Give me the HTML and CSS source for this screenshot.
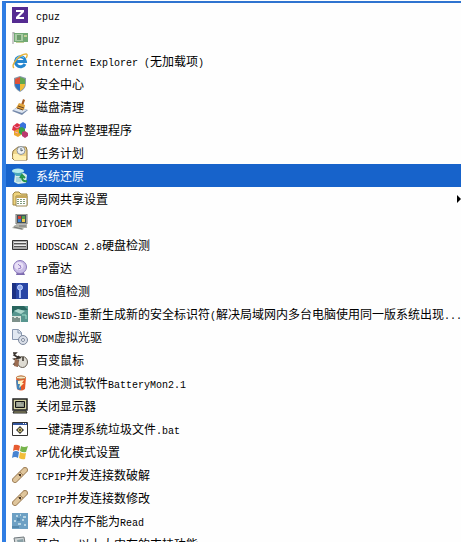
FILE: index.html
```
<!DOCTYPE html>
<html lang="zh-CN">
<head>
<meta charset="utf-8">
<title>系统工具</title>
<link rel="stylesheet" href="styles.css">
</head>
<body>
<nav class="menu" aria-label="系统工具">
<button class="item"><svg class="icon" viewBox="0 0 16 16"><rect width="16" height="16" fill="#552b91"/><path d="M4 3h8v2L7 10h5v2H4v-2l5-5H4z" fill="#fff"/></svg><span class="label"><span class="latin">cpuz</span></span></button>
<button class="item"><svg class="icon" viewBox="0 0 16 16"><path d="M1 2v12M1 3h2" stroke="#999" fill="none"/><path d="M2 3h14v9H2z" fill="#72a974"/><path d="M3 4h8v7H3z" fill="#a9cba4"/><path d="M5 5h4v5H5z" fill="#6d9c6c"/><path d="M12 5h3v2h-3zM4 12h8v1H4z" fill="#c3cf96"/></svg><span class="label"><span class="latin">gpuz</span></span></button>
<button class="item"><svg class="icon" viewBox="0 0 16 16"><path d="M13 11A5 5 0 1 1 13.500 8.500H5" fill="none" stroke="#2385cf" stroke-width="3"/><path d="M4 7a4.500 4.500 0 0 1 8-2" fill="none" stroke="#77c9f4"/><path d="M2 15C-2 12 8 1 14 1c2 0 1 3 0 4" fill="none" stroke="#e5b33b" stroke-width="1.400"/></svg><span class="label"><span class="latin">Internet Explorer (</span>无加载项<span class="latin">)</span></span></button>
<button class="item"><svg class="icon" viewBox="0 0 16 16"><path d="M8 0l6 2v5q0 6-6 9-6-3-6-9V2z" fill="#8799aa"/><path d="M8 1v7H3V3z" fill="#df5138"/><path d="M8 1l5 2v5H8z" fill="#61a84d"/><path d="M3 8h5v7Q3 12 3 8z" fill="#2d72c2"/><path d="M8 8h5q0 4-5 7z" fill="#f2be36"/></svg><span class="label">安全中心</span></button>
<button class="item"><svg class="icon" viewBox="0 0 16 16"><path d="M0 12l5-4 11 3-6 5z" fill="#7589aa"/><path d="M1 11l5-3 9 3-5 3z" fill="#dbe4ef"/><path d="M11 0l2 1-2 6-2-1z" fill="#a55c25"/><path d="M7 4l6 2-1 5-8-2z" fill="#e1a43e"/><path d="M5 9l6 2M6 7l6 2" stroke="#6e4824"/></svg><span class="label">磁盘清理</span></button>
<button class="item"><svg class="icon" viewBox="0 0 16 16"><path d="M1 4l4-3 4 2v5l-4 2-5-2z" fill="#dd3045"/><path d="M8 2l3-2 3 2v4l-3 2-3-2z" fill="#3973dd"/><path d="M2 9l4-2 3 2v4l-3 2-4-2z" fill="#eca62d"/><path d="M7 6l3-1 3 2v4l-3 2-3-2z" fill="#39a348"/><path d="M10 10l3-1 3 2v3l-3 2-3-2z" fill="#bb396e"/><path d="M2 4l3 2 3-2M3 10l3 1" stroke="#f2a4c5" fill="none"/></svg><span class="label">磁盘碎片整理程序</span></button>
<button class="item"><svg class="icon" viewBox="0 0 16 16"><path d="M1 6l5-4h8l1 3v10H2L0 13z" fill="#efd58a" stroke="#8d7441"/><circle cx="9" cy="5.500" r="4" fill="#eef1f3" stroke="#8b949d"/><path d="M9 3v3l2-1" fill="none" stroke="#526270"/><path d="M1 9h5l2 2h6v4H2z" fill="#fff0b3"/></svg><span class="label">任务计划</span></button>
<button class="item selected"><svg class="icon" viewBox="0 0 16 16"><path d="M3 6l9-1 3 2-1 8-8 1-4-2z" fill="#d4ece7"/><ellipse cx="6" cy="3" rx="6" ry="2.500" fill="#b5ebed"/><path d="M1 4q5 2 10 0L9 8H4z" fill="#4ba9bb"/><path d="M4 9h5v5H4z" fill="#a9d4db"/><path d="M15 13q-5 1-5-4m-2 1l2-3 3 3" fill="none" stroke="#239247" stroke-width="2"/></svg><span class="label">系统还原</span></button>
<button class="item"><svg class="icon" viewBox="0 0 16 16"><path d="M1 14V3l2-2h4l2 2h6v11z" fill="#eed37c" stroke="#9f8642"/><path d="M4 5h11v10H4z" fill="#fff" stroke="#9a8955"/><path d="M4 5h11v2H4z" fill="#c7a858"/><path d="M6 8v6M9 8v6M12 8v6" stroke="#7f9b7b" stroke-width="2" stroke-dasharray="1 1"/></svg><span class="label">局网共享设置</span><span class="arrow"></span></button>
<button class="item"><svg class="icon" viewBox="0 0 16 16"><path d="M4 0h11v10H4z" fill="#c9c9b9" stroke="#777"/><path d="M5 1h9v8H5z" fill="#40515b"/><path d="M6 2h3v3H6z" fill="#d44334"/><path d="M10 2h3v3h-3z" fill="#58a149"/><path d="M6 5h3v3H6z" fill="#397dcc"/><path d="M10 5h3v3h-3z" fill="#edc94b"/><path d="M3 11h12v3H3zM0 14l3-3 9 2-1 3z" fill="#b1b2a8"/><path d="M2 13l8 2M7 12h7" stroke="#777"/></svg><span class="label"><span class="latin">DIYOEM</span></span></button>
<button class="item"><svg class="icon" viewBox="0 0 16 16"><path d="M.5 3.500h15v9H.5z" fill="#aaa" stroke="#333"/><path d="M2 5.500h12M2 8.500h12" stroke="#eee"/><path d="M2 6.500h12M2 9.500h12" stroke="#555"/></svg><span class="label"><span class="latin">HDDSCAN 2.8</span>硬盘检测</span></button>
<button class="item"><svg class="icon" viewBox="0 0 16 16"><path d="M5 12l6-1 2 4H4z" fill="#7b69ad"/><circle cx="8" cy="7" r="6.500" fill="#c8bce6" stroke="#8a78bb"/><ellipse cx="7" cy="6" rx="4.500" ry="4" fill="#e8dff6"/><path d="M6 4l3 3M8 5l1 3-3 1" stroke="#9b84c9" fill="none"/></svg><span class="label"><span class="latin">IP</span>雷达</span></button>
<button class="item"><svg class="icon" viewBox="0 0 16 16"><rect width="16" height="16" fill="#2946a5"/><path d="M0 0h4v16H0z" fill="#1c3183"/><circle cx="8" cy="4.500" r="2.500" fill="#8da8ee" stroke="#c6d6ff"/><path d="M8 7v8" stroke="#a4bbf5" stroke-width="2"/></svg><span class="label"><span class="latin">MD5</span>值检测</span></button>
<button class="item"><svg class="icon" viewBox="0 0 16 16"><rect width="16" height="16" fill="#57968f"/><path d="M0 0h12l4 4H3L0 8z" fill="#28655e"/><path d="M2 5l4-2 7 2-4 3z" fill="#abd7cd"/><path d="M0 10h9v6H0z" fill="#d9e3dc"/><path d="M1 11v5M3 12v4M5 11v5M7 12v4" stroke="#233e39"/><path d="M10 9h4v4" stroke="#9ee0cb" fill="none"/></svg><span class="label"><span class="latin">NewSID-</span>重新生成新的安全标识符<span class="latin">(</span>解决局域网内多台电脑使用同一版系统出现<span class="latin">...</span></span></button>
<button class="item"><svg class="icon" viewBox="0 0 16 16"><path d="M.5.500h6l3 3v7h-9z" fill="#e1e8f1" stroke="#8796ae"/><path d="M6 1v3h3" fill="none" stroke="#8796ae"/><circle cx="11" cy="11" r="4.500" fill="#dadfe8" stroke="#7b879c"/><circle cx="11" cy="11" r="1.500" fill="#fff" stroke="#7b879c"/></svg><span class="label"><span class="latin">VDM</span>虚拟光驱</span></button>
<button class="item"><svg class="icon" viewBox="0 0 16 16"><ellipse cx="10.500" cy="10" rx="5" ry="5.500" fill="#dedbd2" stroke="#665f55"/><path d="M1 1h3l-2 2 5 3-5 1 4 2-4 3 4 2M6 4l3 2M11 5V9" fill="none" stroke="#37312b" stroke-width="1.500"/><path d="M3 6l4 3-1 6-4-1z" fill="#9b6c51"/></svg><span class="label">百变鼠标</span></button>
<button class="item"><svg class="icon" viewBox="0 0 16 16"><path d="M4 2q5-3 10 0l-1 12q-4 3-8 0z" fill="#e45929"/><ellipse cx="9" cy="2.500" rx="4.500" ry="1.500" fill="#f4e8cc" stroke="#b8844c"/><path d="M4 5l5 1v9q-3 0-4-1z" fill="#4283b9"/><path d="M6 6l6-1-2 3h2l-5 5 1-4H6z" fill="#fff2c3"/></svg><span class="label">电池测试软件<span class="latin">BatteryMon2.1</span></span></button>
<button class="item"><svg class="icon" viewBox="0 0 16 16"><path d="M1 1h14v11H1z" fill="#d2d1a2" stroke="#222" stroke-width="1.500"/><path d="M3.500 3.500h9v6h-9z" fill="#8e9588" stroke="#111"/><path d="M2 13h12l1 2H1z" fill="#aaa778" stroke="#222"/><path d="M5 5h4M5 7h6" stroke="#c0c5b4"/></svg><span class="label">关闭显示器</span></button>
<button class="item"><svg class="icon" viewBox="0 0 16 16"><path d="M.5 1.500h15v13H.5z" fill="#fff" stroke="#333"/><path d="M1 2h14v2H1z" fill="#31559d"/><path d="M11 2.500h3" stroke="#fff" stroke-dasharray="1 1"/><circle cx="8" cy="9" r="2.500" fill="#e8d77d" stroke="#333"/><path d="M8 5v2M8 11v2M4 9h2M10 9h2" stroke="#333"/><circle cx="8" cy="9" r="1" fill="#333"/></svg><span class="label">一键清理系统垃圾文件<span class="latin">.bat</span></span></button>
<button class="item"><svg class="icon" viewBox="0 0 16 16"><path d="M2 1q3-1 6 1L7 7Q4 5 1 7z" fill="#e65c31"/><path d="M9 2q3 2 7 0l-2 6q-3 1-6-1z" fill="#76b44b"/><path d="M1 8q3-2 6 0l-1 6q-3-2-6 0z" fill="#4783d1"/><path d="M8 8q3 2 6 1l-1 6q-3 1-6-1z" fill="#f2be39"/></svg><span class="label"><span class="latin">XP</span>优化模式设置</span></button>
<button class="item"><svg class="icon" viewBox="0 0 16 16"><path d="M3 13L13 3" stroke="#a48660" stroke-width="6" stroke-linecap="round"/><path d="M3 13L13 3" stroke="#dfc59b" stroke-width="4" stroke-linecap="round"/><path d="M6 7l3 3M8 5l3 3" stroke="#a88861"/><path d="M7 8h2" stroke="#473526" stroke-width="2"/></svg><span class="label"><span class="latin">TCPIP</span>并发连接数破解</span></button>
<button class="item"><svg class="icon" viewBox="0 0 16 16"><path d="M3 13L13 3" stroke="#a48660" stroke-width="6" stroke-linecap="round"/><path d="M3 13L13 3" stroke="#dfc59b" stroke-width="4" stroke-linecap="round"/><path d="M6 7l3 3M8 5l3 3" stroke="#a88861"/><path d="M7 8h2" stroke="#473526" stroke-width="2"/></svg><span class="label"><span class="latin">TCPIP</span>并发连接数修改</span></button>
<button class="item"><svg class="icon" viewBox="0 0 16 16"><rect width="16" height="16" fill="#6da0c4"/><path d="M4 3h2M8 2h1M11 4h3M10 7h2M2 8h2M6 11h3M12 12h2" stroke="#b8d6e5" stroke-width="2"/><path d="M0 13h7v2H0zM5 5h3v3H5z" fill="#5488ac"/></svg><span class="label">解决内存不能为<span class="latin">Read</span></span></button>
<button class="item"><svg class="icon" viewBox="0 0 16 16"><path d="M2 2l10-1 2 12H4z" fill="#cfd4d5" stroke="#70787c"/><path d="M5 4l6-1 1 5H6z" fill="#8aa1a7"/></svg><span class="label">开启<span class="latin">4GB</span>以上大内存的支持功能</span></button>
</nav>
</body>
</html>
```
FILE: styles.css
```
* { box-sizing: border-box; }
html { height: 100%; background: #fff; overflow: hidden; }
body { height: 100%; margin: 0; padding: 1px 5px 0 2px; overflow: hidden; }
.menu {
  display: flex;
  flex-direction: column;
  min-height: 100%;
  border-top: 2px solid #2f74d0;
  border-left: 4px solid #2f7de3;
  background: #fefefe;
}
.item {
  display: flex;
  flex: none;
  align-items: center;
  gap: 8px;
  height: 23px;
  margin: 0;
  padding: 1px 0 0 6px;
  border: 0;
  background: transparent;
  color: #000;
  font: 12px/20px "Noto Sans CJK SC", sans-serif;
  text-align: left;
  white-space: nowrap;
}
.item.selected { background: #1763cb; color: #fff; }
.icon { width: 16px; height: 16px; flex: none; }
.label { flex: none; height: 20px; }
.latin { font: 10px/10px "Liberation Mono", monospace; white-space: pre; }
.arrow {
  margin-left: auto;
  border: 4px solid transparent;
  border-left-color: #000;
  border-right: 0;
}
```
